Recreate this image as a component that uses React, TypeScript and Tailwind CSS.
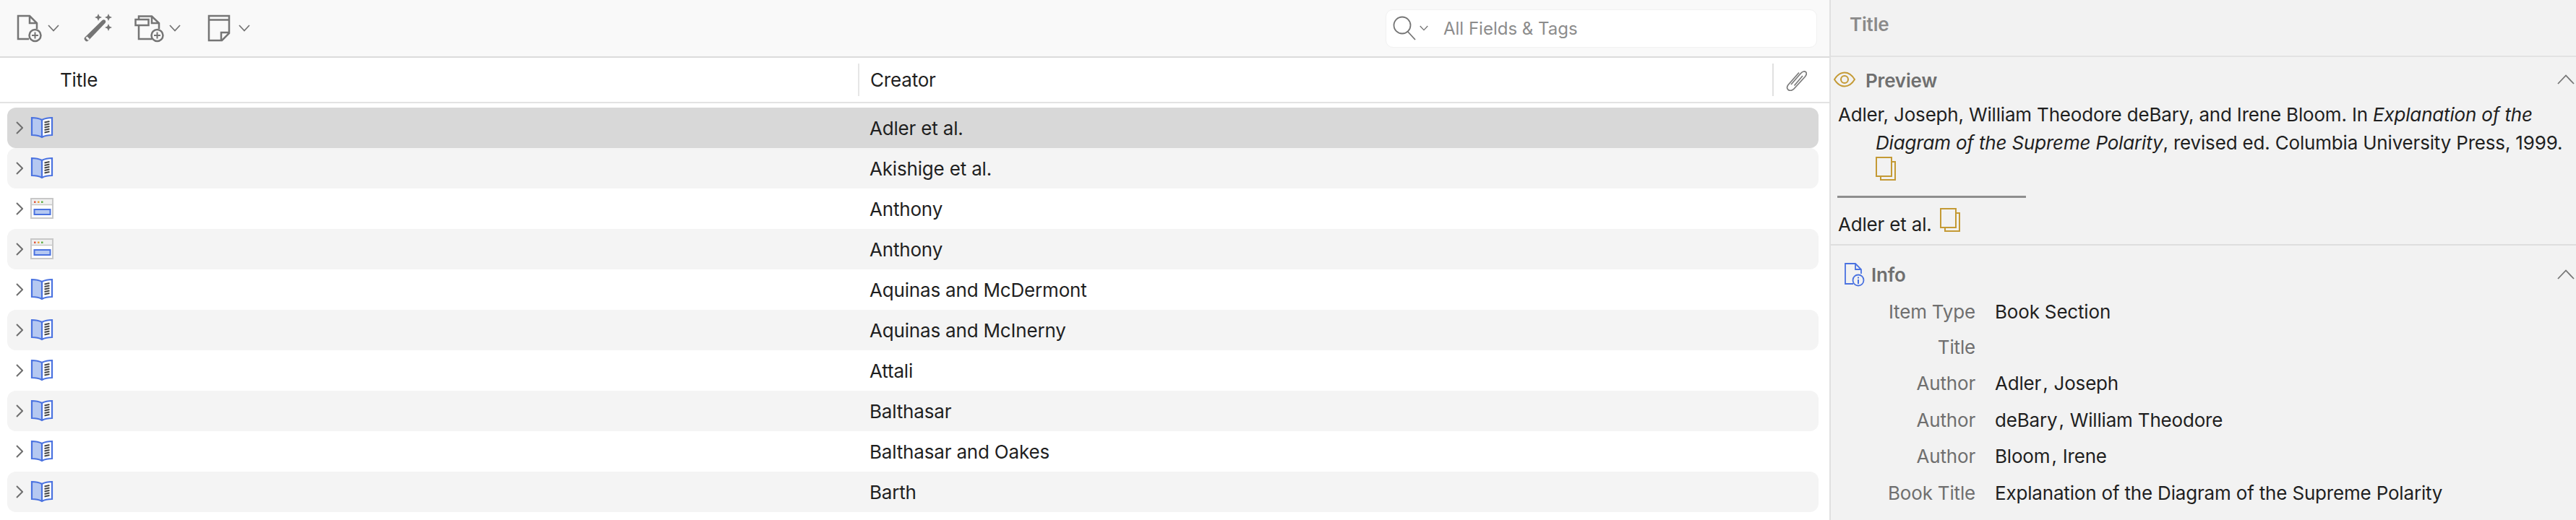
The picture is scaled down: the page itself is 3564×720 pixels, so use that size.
const rows = [
  { creator: "Adler et al.", icon: "book" },
  { creator: "Akishige et al.", icon: "book" },
  { creator: "Anthony", icon: "web" },
  { creator: "Anthony", icon: "web" },
  { creator: "Aquinas and McDermont", icon: "book" },
  { creator: "Aquinas and McInerny", icon: "book" },
  { creator: "Attali", icon: "book" },
  { creator: "Balthasar", icon: "book" },
  { creator: "Balthasar and Oakes", icon: "book" },
  { creator: "Barth", icon: "book" },
];

function ChevronDown({ className }: { className: string }) {
  return (
    <svg className={className} viewBox="0 0 16 10" fill="none" stroke="#757575" strokeWidth="1.8">
      <path d="M1 1l7 7.5L15 1" />
    </svg>
  );
}

function NewItemIcon() {
  return (
    <svg className="w-[36px] h-[40px]" viewBox="0 0 36 40" fill="none" stroke="#757575" strokeWidth="2.5">
      <path d="M17 35H2V3h16l10 10v8M18 3v10h10" />
      <circle cx="25.5" cy="30" r="8" />
      <path d="M25.5 25.5v9M21 30h9" strokeWidth="2" />
    </svg>
  );
}

function WandIcon() {
  return (
    <svg className="w-[40px] h-[40px]" viewBox="0 0 40 40" fill="#757575">
      <path d="M2 33L26 9.5c2-1.8 3.5-1.5 4.5-.5s1.2 2.8-.5 4.5L7 37.5c-1.5 1.3-2.7 1-3.8 0S.8 34.500 2 33z" />
      <path d="M5.500 31.500l3.500 3.500-2 2-3.500-3.500z" fill="#fafafa" />
      <path d="M21 0l1.500 3.500L26 5l-3.500 1.500L21 10l-1.500-3.500L16 5l3.500-1.500zM35 0l1.500 3.500L40 5l-3.500 1.500L35 10l-1.500-3.500L30 5l3.500-1.500zM35 14l1.500 3.500L40 19l-3.500 1.500L35 24l-1.500-3.500L30 19l3.500-1.500z" />
    </svg>
  );
}

function AttachIcon() {
  return (
    <svg className="w-[42px] h-[40px]" viewBox="0 0 42 40" fill="none" stroke="#757575" strokeWidth="2.5">
      <path d="M6 9V3.500h18L34 13v8M24 3.500V13h10M6 16v19h18" />
      <rect x="1.500" y="8" width="18" height="8" />
      <circle cx="31.500" cy="30" r="8" />
      <path d="M31.500 25.500v9M27 30h9" strokeWidth="2" />
    </svg>
  );
}

function NoteIcon() {
  return (
    <svg className="w-[32px] h-[38px]" viewBox="0 0 32 38" fill="none" stroke="#757575" strokeWidth="2.5">
      <path d="M2 2h28v24L20 36H2zM2 7.500h28M30 25H19v11" />
    </svg>
  );
}

function BookIcon() {
  return (
    <svg className="w-[32px] h-[32px]" viewBox="0 0 32 32" fill="none">
      <path d="M2 2l14 3v23L2 26z" fill="#b5c8f1" />
      <path d="M16 5l14-3v24l-14 2z" fill="#ffffff" />
      <path d="M2 2c5 0 10 1 14 3 4-2 9-3 14-3v24c-5 0-10 .8-14 3-4-2.200-9-3-14-3zM16 5v24" stroke="#4a72e0" strokeWidth="2.200" />
      <path d="M19.500 8.500l7-1.500M19.500 12l7-1.500M19.500 15.500l7-1.500M19.500 19l7-1.500M19.500 22.500l7-1.500" stroke="#444444" strokeWidth="1.800" />
    </svg>
  );
}

function WebIcon() {
  return (
    <svg className="w-[32px] h-[30px]" viewBox="0 0 32 30" fill="none">
      <rect x="1" y="1" width="30" height="27" fill="#ffffff" stroke="#c8c8c8" strokeWidth="2" />
      <rect x="2" y="2" width="28" height="7" fill="#f0f0f0" />
      <path d="M1 9.500h30" stroke="#c8c8c8" strokeWidth="1.500" />
      <rect x="5" y="4.500" width="2.500" height="2.500" fill="#e0593f" />
      <rect x="10" y="4.500" width="2.500" height="2.500" fill="#e8a33d" />
      <rect x="15" y="4.500" width="2.500" height="2.500" fill="#5cb041" />
      <rect x="5.500" y="16" width="22" height="7" fill="#b5c8f1" stroke="#4a72e0" strokeWidth="2" />
    </svg>
  );
}

function CopyIcon() {
  return (
    <svg className="w-[28px] h-[33px] inline-block align-top" viewBox="0 0 28 33" fill="none" stroke="#c49a35" strokeWidth="2">
      <rect x="1" y="1" width="21" height="26" />
      <path d="M22 7h5v25H7v-5" />
    </svg>
  );
}

function ChevronUp() {
  return (
    <svg className="w-[24px] h-[14px]" viewBox="0 0 24 14" fill="none" stroke="#757575" strokeWidth="1.800">
      <path d="M1 13L12 1.500 23 13" />
    </svg>
  );
}

function Name({ last, first }: { last: string; first: string }) {
  return (
    <span className="flex">
      <span>{last}</span>
      <span className="ml-[2px] mr-[8px]">,</span>
      <span>{first}</span>
    </span>
  );
}

function InfoRow({ label, height, children }: { label: string; height: string; children?: React.ReactNode }) {
  return (
    <div className={`flex items-center ${height}`}>
      <div className="w-[200px] text-right text-[#6f6f6f]">{label}</div>
      <div className="ml-[27px] text-[#1f1f1f]">{children}</div>
    </div>
  );
}

export default function App() {
  return (
    <div className="w-[3564px] h-[720px] flex overflow-hidden bg-white text-[26px] leading-[39px] tracking-[-0.18px] text-[#1f1f1f] font-['Inter',sans-serif]">
      {/* Items pane */}
      <div className="w-[2531px] shrink-0">
        <div className="h-[80px] bg-[#f9f9f9] border-b-2 border-[#dcdcdc] flex items-center pl-[23px] pr-[17px]">
          <NewItemIcon />
          <ChevronDown className="w-[16px] h-[10px] ml-[7px]" />
          <div className="ml-[33px]">
            <WandIcon />
          </div>
          <div className="ml-[31px]">
            <AttachIcon />
          </div>
          <ChevronDown className="w-[16px] h-[10px] ml-[6px]" />
          <div className="ml-[37px]">
            <NoteIcon />
          </div>
          <ChevronDown className="w-[16px] h-[10px] ml-[11px]" />
          <div className="ml-auto w-[597px] h-[53px] bg-white rounded-[10px] border border-[#f1f1f1] flex items-center pl-[9px]">
            <svg className="w-[33px] h-[34px]" viewBox="0 0 33 34" fill="none" stroke="#757575" strokeWidth="1.800">
              <circle cx="13" cy="13" r="11.500" />
              <path d="M20 21l11 12" />
            </svg>
            <ChevronDown className="w-[12px] h-[8px] ml-[4px]" />
            <span className="ml-[21px] text-[24px] tracking-normal text-[#8c8c8c]">All Fields &amp; Tags</span>
          </div>
        </div>

        <div className="h-[63px] border-b-2 border-[#e3e3e3] flex items-center">
          <div className="w-[1187px] pl-[83px]">Title</div>
          <div className="h-[45px] border-l-2 border-[#e6e6e6] flex items-center pl-[15px] flex-1">Creator</div>
          <div className="h-[45px] w-[79px] border-l-2 border-[#e0e0e0] flex items-center pl-[14px]">
            <svg className="w-[32px] h-[30px]" viewBox="0 0 32 30" fill="none" stroke="#7a7a7a" strokeWidth="1.700">
              <path d="M10 21L23.500 5.500c2.500-3 5.500-3 6.800-1.800s1.200 4-1.200 6.800L14 27c-2.500 2.800-6 2.800-8 1.300s-2-4.300 0-6.800L21 4.500" />
              <path d="M14.500 22.500L26 9" />
            </svg>
          </div>
        </div>

        <div className="pt-[6px] pl-[10px] pr-[15px]">
          {rows.map((row, i) => (
            <div
              key={i}
              className={`h-[56px] flex items-center rounded-[12px] ${
                i === 0 ? "bg-[#d8d8d8]" : i % 2 === 1 ? "bg-[#f4f4f4]" : "bg-white"
              }`}
            >
              <svg className="w-[10px] h-[18px] ml-[12px]" viewBox="0 0 10 18" fill="none" stroke="#6f6f6f" strokeWidth="2">
                <path d="M1 1l8 8-8 8" />
              </svg>
              <div className="w-[32px] ml-[10px] flex justify-center">
                {row.icon === "book" ? <BookIcon /> : <WebIcon />}
              </div>
              <div className="ml-[1129px]">{row.creator}</div>
            </div>
          ))}
        </div>
      </div>

      {/* Item details pane */}
      <div className="flex-1 bg-[#f2f2f2] border-l-2 border-[#e0e0e0]">
        <div className="h-[79px] border-b-2 border-[#e3e3e3] pl-[26px] pb-[10px] flex items-center font-semibold text-[#8a8a8a]">
          Title
        </div>

        <section className="h-[261px] border-b-2 border-[#dedede]">
          <div className="h-[60px] pt-[2px] pl-[4px] pr-[2px] flex items-center">
            <svg className="w-[30px] h-[22px]" viewBox="0 0 30 22" fill="none" stroke="#c49a35" strokeWidth="2">
              <path d="M1 11C5 4.500 10 1.500 15 1.500S25 4.500 29 11c-4 6.500-9 9.500-14 9.500S5 17.500 1 11z" />
              <circle cx="15" cy="11" r="5" />
            </svg>
            <span className="ml-[14px] mt-[3px] font-semibold text-[#6f6f6f]">Preview</span>
            <div className="ml-auto">
              <ChevronUp />
            </div>
          </div>
          <p className="pl-[62px] pr-[15px] indent-[-52px]">
            Adler, Joseph, William Theodore deBary, and Irene Bloom. In <i>Explanation of the Diagram of the Supreme Polarity</i>, revised ed. Columbia University Press, 1999. <CopyIcon />
          </p>
          <div className="mt-[15px] ml-[9px] w-[261px] h-[3px] bg-[#8e8e8e]" />
          <div className="mt-[17px] pl-[10px] flex items-start">
            <span>Adler et al.</span>
            <span className="ml-[11px] mt-[-3px] flex">
              <CopyIcon />
            </span>
          </div>
        </section>

        <section>
          <div className="h-[67px] pt-[13px] pl-[19px] pr-[2px] flex items-center">
            <svg className="w-[28px] h-[33px]" viewBox="0 0 28 33" fill="none" stroke="#4a72e0" strokeWidth="1.800">
              <path d="M12 29H1V1h14l8 8v6M15 1v8h8" />
              <circle cx="19" cy="24" r="7.500" />
              <path d="M19 23v6" strokeWidth="2" />
              <path d="M19 19.500v2" strokeWidth="2" />
            </svg>
            <span className="ml-[9px] font-semibold text-[#6f6f6f]">Info</span>
            <div className="ml-auto">
              <ChevronUp />
            </div>
          </div>
          <InfoRow label="Item Type" height="h-[49px]">Book Section</InfoRow>
          <InfoRow label="Title" height="h-[49px]" />
          <InfoRow label="Author" height="h-[51px]"><Name last="Adler" first="Joseph" /></InfoRow>
          <InfoRow label="Author" height="h-[50px]"><Name last="deBary" first="William Theodore" /></InfoRow>
          <InfoRow label="Author" height="h-[51px]"><Name last="Bloom" first="Irene" /></InfoRow>
          <InfoRow label="Book Title" height="h-[51px]">Explanation of the Diagram of the Supreme Polarity</InfoRow>
        </section>
      </div>
    </div>
  );
}
